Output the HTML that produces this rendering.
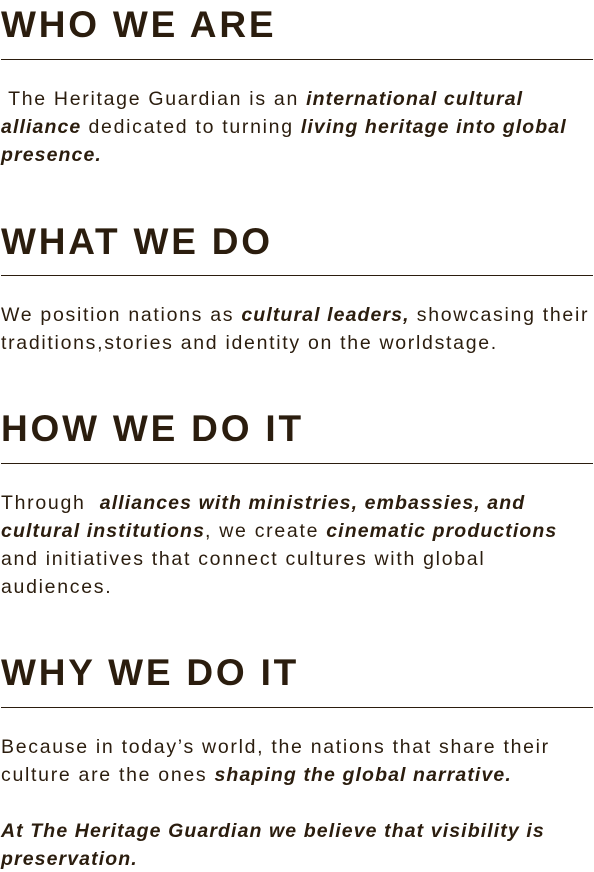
<!DOCTYPE html>
<html><head><meta charset="utf-8"><style>
html,body{margin:0;padding:0;background:#fff;width:594px;height:872px;overflow:hidden}
body{position:relative;color:#2b1d0e;font-family:"Liberation Sans",sans-serif}
.h{position:absolute;left:1px;font-size:37px;font-weight:bold;line-height:48px;letter-spacing:2.8px;white-space:nowrap}
.r{position:absolute;left:1px;width:592px;height:1px;background:#2b1d0e}
.p{position:absolute;left:1px;font-size:19.5px;line-height:28px;letter-spacing:1.7px;white-space:nowrap}
.p b{font-style:italic;font-weight:bold;letter-spacing:1.1px}
</style></head><body>
<div class="h" style="top:1px">WHO WE ARE</div>
<div class="r" style="top:59px"></div>
<div class="p" style="top:85px">&nbsp;The Heritage Guardian is an <b>international cultural</b><br><b>alliance</b> dedicated to turning <b>living heritage into global</b><br><b>presence.</b></div>

<div class="h" style="top:218px">WHAT WE DO</div>
<div class="r" style="top:275px"></div>
<div class="p" style="top:301px">We position nations as <b>cultural leaders,</b> showcasing their<br>traditions,stories and identity on the worldstage.</div>

<div class="h" style="top:405px">HOW WE DO IT</div>
<div class="r" style="top:463px"></div>
<div class="p" style="top:489px">Through &nbsp;<b>alliances with ministries, embassies, and</b><br><b>cultural institutions</b>, we create <b>cinematic productions</b><br>and initiatives that connect cultures with global<br>audiences.</div>

<div class="h" style="top:649px">WHY WE DO IT</div>
<div class="r" style="top:707px"></div>
<div class="p" style="top:733px">Because in today’s world, the nations that share their<br>culture are the ones <b>shaping the global narrative.</b><br>&nbsp;<br><b>At The Heritage Guardian we believe that visibility is</b><br><b>preservation.</b></div>
</body></html>
